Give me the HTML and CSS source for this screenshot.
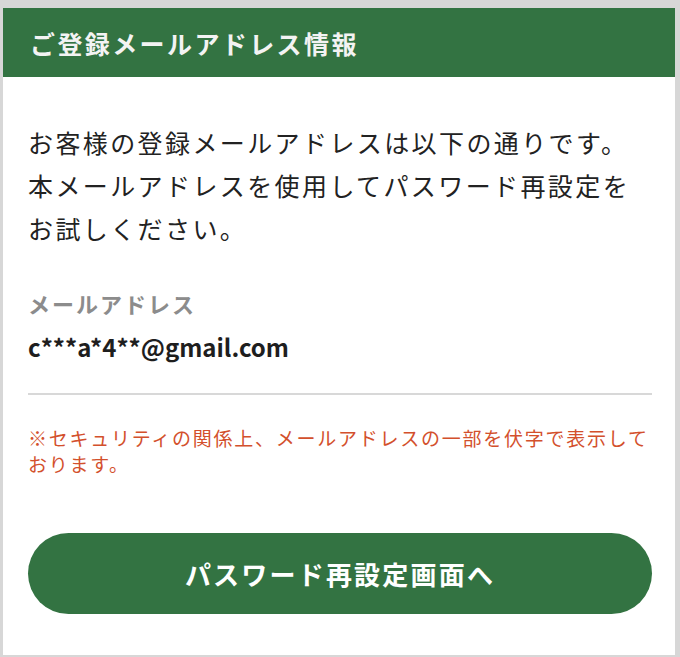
FILE: index.html
```html
<!DOCTYPE html>
<html lang="ja">
<head>
<meta charset="utf-8">
<link rel="stylesheet" href="styles.css">
</head>
<body>
<div class="card">
  <div class="header">ご登録メールアドレス情報</div>
  <div class="content">
    <p class="lead">お客様の登録メールアドレスは以下の通りです。<br>本メールアドレスを使用してパスワード再設定を<br>お試しください。</p>
    <div class="label">メールアドレス</div>
    <div class="email">c***a*4**@gmail.com</div>
    <hr class="sep">
    <p class="note">※セキュリティの関係上、メールアドレスの一部を伏字で表示しております。</p>
    <a class="btn" href="#">パスワード再設定画面へ</a>
  </div>
</div>
</body>
</html>
```
FILE: styles.css
```css
html, body {
  margin: 0;
  padding: 0;
  background: #d7d7d7;
  font-family: "Noto Sans CJK JP", "Noto Sans", sans-serif;
}
.card {
  margin: 8px 5px 0 3px;
  height: 647px;
  background: #ffffff;
  box-sizing: border-box;
}
.header {
  height: 69px;
  background: #337342;
  color: #f3f3f3;
  font-size: 25px;
  font-weight: 700;
  letter-spacing: 2.4px;
  display: flex;
  align-items: center;
  padding-left: 27px;
  box-sizing: border-box;
}
.content {
  padding: 0 23px 0 25px;
}
.lead {
  margin: 44px 0 0 0;
  font-size: 25px;
  line-height: 43px;
  letter-spacing: 2.4px;
  color: #222222;
}
.label {
  margin-top: 38px;
  font-size: 22px;
  font-weight: 700;
  color: #8c8c8c;
  letter-spacing: 2px;
  line-height: 30px;
}
.email {
  margin-top: 12px;
  font-size: 24px;
  font-weight: 700;
  color: #1e1e1e;
  line-height: 34px;
}
.sep {
  margin: 29px 0 0 0;
  border: 0;
  height: 2px;
  background: #d8d8d8;
}
.note {
  margin: 30px 0 0 0;
  font-size: 19px;
  line-height: 26px;
  letter-spacing: 1.75px;
  color: #d3502c;
}
.btn {
  margin-top: 56px;
  height: 81px;
  border-radius: 41px;
  background: #337342;
  color: #ffffff;
  font-size: 26px;
  font-weight: 700;
  letter-spacing: 2.2px;
  display: flex;
  align-items: center;
  justify-content: center;
  text-decoration: none;
}
```
